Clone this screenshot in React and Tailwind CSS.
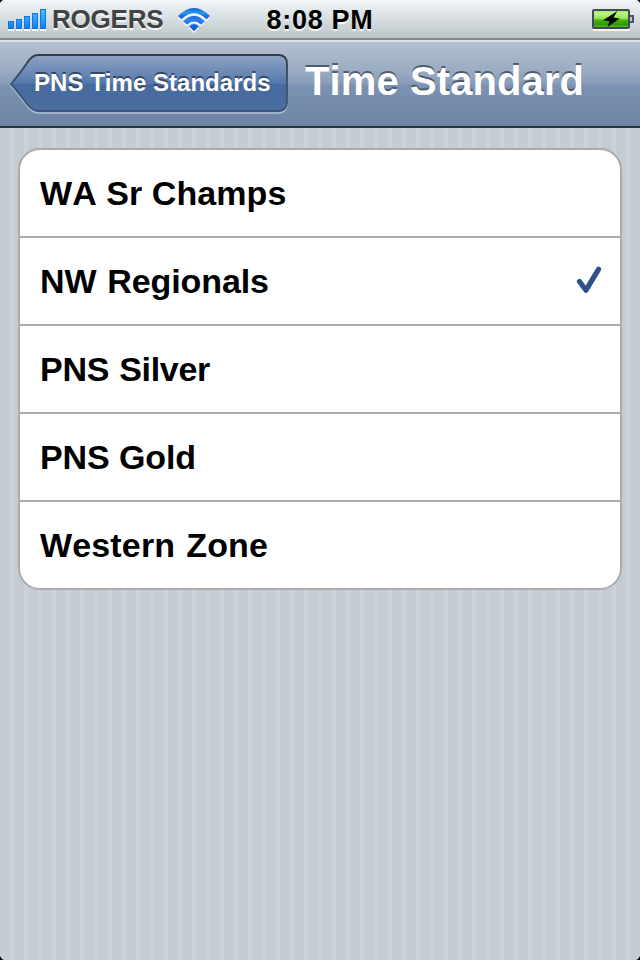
const rows = [
  { name: 'WA Sr Champs', fit: 'tracking-[0.07px]' },
  { name: 'NW Regionals', fit: '[word-spacing:1.5px] tracking-[-0.1px]', checked: true },
  { name: 'PNS Silver', fit: 'tracking-[-0.3px] [word-spacing:1px]' },
  { name: 'PNS Gold', fit: 'tracking-[-0.1px]' },
  { name: 'Western Zone', fit: 'tracking-[0.15px] [word-spacing:1.5px]' },
];

function Signal() {
  return (
    <svg width="40" height="22" viewBox="0 0 40 22" className="shrink-0">
      <defs>
        <linearGradient id="bar" x1="0" y1="0" x2="0" y2="22" gradientUnits="userSpaceOnUse">
          <stop offset="0" stopColor="#4cc4ff" />
          <stop offset="0.5" stopColor="#229dff" />
          <stop offset="1" stopColor="#0a74f5" />
        </linearGradient>
      </defs>
      {[8, 10, 13, 16, 20].map((h, i) => (
        <g key={h}>
          <rect x={i * 8} y={21 - h} width="6" height={h + 1} fill="#fff" />
          <rect x={i * 8} y={20 - h} width="6" height={h} fill="#1673df" />
          <rect x={i * 8 + 1} y={21 - h} width="4" height={h - 2} fill="url(#bar)" />
        </g>
      ))}
    </svg>
  );
}

function Wifi() {
  return (
    <svg width="34" height="26" viewBox="0 0 34 26" className="shrink-0">
      <defs>
        <linearGradient id="wifi" x1="0" y1="0" x2="0" y2="24" gradientUnits="userSpaceOnUse">
          <stop offset="0" stopColor="#1a58c4" />
          <stop offset="0.2" stopColor="#2b9df8" />
          <stop offset="0.34" stopColor="#1c68da" />
          <stop offset="0.5" stopColor="#2585f5" />
          <stop offset="1" stopColor="#0b45cc" />
        </linearGradient>
        <g id="arcs">
          <path d="M1 8Q17 -8 33 8L29.600 11.400Q17 -1 4.400 11.400Z" />
          <path d="M6.400 13.300Q17 2.700 27.600 13.300L24 16.800Q17 10 10 16.800Z" />
          <path d="M12.300 18.500Q17 13.600 21.700 18.500L17 23.200Z" />
        </g>
      </defs>
      <use href="#arcs" y="1.7" fill="#fff" />
      <use href="#arcs" fill="url(#wifi)" />
    </svg>
  );
}

function Battery() {
  return (
    <svg width="44" height="24" viewBox="0 0 44 24" className="shrink-0">
      <defs>
        <linearGradient id="charge" x1="0" y1="0" x2="0" y2="1">
          <stop offset="0" stopColor="#9be55a" />
          <stop offset="0.2" stopColor="#b9f780" />
          <stop offset="0.48" stopColor="#8de44c" />
          <stop offset="0.56" stopColor="#46b50c" />
          <stop offset="0.8" stopColor="#2f9a00" />
          <stop offset="1" stopColor="#5fca20" />
        </linearGradient>
      </defs>
      <rect x="1" y="20" width="37" height="3" fill="#fff" opacity=".8" />
      <rect x="1" y="2" width="36" height="18" rx="1" fill="url(#charge)" stroke="#43485f" strokeWidth="2" />
      <path d="M38 8h3v6h-3" fill="#c5cbd0" stroke="#4d5369" strokeWidth="2" />
      <path d="M25.500 3L11 12.300L17.500 13.200L15.500 19L27.800 10.600L21.500 9.400Z" fill="#050805" />
    </svg>
  );
}

function BackButton() {
  return (
    <button className="relative ml-[10px] mt-[10px] h-[62px] w-[280px] shrink-0 pl-[24px] text-left">
      <svg width="280" height="62" viewBox="0 0 280 62" className="absolute left-0 top-0">
        <defs>
          <linearGradient id="back" x1="0" y1="0" x2="0" y2="1">
            <stop offset="0" stopColor="#8ba2c2" />
            <stop offset="0.25" stopColor="#738fb8" />
            <stop offset="0.51" stopColor="#5377aa" />
            <stop offset="0.52" stopColor="#466a9f" />
            <stop offset="1" stopColor="#4a6e9f" />
          </linearGradient>
          <linearGradient id="edge" x1="0" y1="0" x2="0" y2="1">
            <stop offset="0" stopColor="#333b47" />
            <stop offset="0.5" stopColor="#3c4e6c" />
            <stop offset="1" stopColor="#3c5379" />
          </linearGradient>
          <path id="shape" d="M1 32Q11 20 17 11Q22 3 28 3H268Q277 3 277 12V50Q277 59 268 59H28Q23 59 17 52Q11 44 1 32Z" />
        </defs>
        <use href="#shape" y="2" fill="none" stroke="#aebdce" strokeWidth="1.500" />
        <use href="#shape" fill="url(#back)" stroke="url(#edge)" strokeWidth="1.800" />
      </svg>
      <span className="relative block whitespace-nowrap text-[24px] leading-[60px] tracking-[0.03px] text-white [text-shadow:0_-2px_0_#34466a]">
        PNS Time Standards
      </span>
    </button>
  );
}

export default function App() {
  return (
    <div className="relative flex h-[960px] w-[640px] flex-col overflow-hidden bg-[repeating-linear-gradient(90deg,#c5ccd4_0px,#c5ccd4_10px,#cbd2d8_10px,#cbd2d8_14px)] font-['Liberation_Sans',Arial,sans-serif] font-bold [font-kerning:none]">
      <header className="grid h-[40px] shrink-0 grid-cols-[1fr_auto_1fr] items-start border-b-2 border-[#7f8a8c] bg-linear-to-b from-[#f0f6f9] to-[#bec5c7] leading-[38px]">
        <div className="flex pl-[8px]">
          <div className="pt-[9px] leading-none"><Signal /></div>
          <span className="ml-[4px] text-[26px] tracking-[-0.2px] text-[#404244] [text-shadow:0_2px_0_#f4f7f8]">ROGERS</span>
          <div className="ml-[14px] pt-[8px] leading-none"><Wifi /></div>
        </div>
        <time className="text-[27px] leading-[40px] tracking-[0.7px] text-black [text-shadow:0_2px_0_#f4f7f8]">8:08 PM</time>
        <div className="flex justify-end pr-[4px] pt-[8px] leading-none"><Battery /></div>
      </header>
      <nav className="flex h-[88px] shrink-0 border-b-2 border-t-2 border-b-[#2d3239] border-t-[#dde2e6] bg-[linear-gradient(180deg,#b3c0d0_0px,#9badc2_28px,#889cb9_42px,#7c92b2_43px,#6d84a4_84px)]">
        <BackButton />
        <h1 className="ml-[15px] whitespace-nowrap text-[40px] leading-[78px] tracking-[0.1px] text-white [text-shadow:0_-2px_0_#4c5b70]">Time Standard</h1>
      </nav>
      <main className="px-[18px] pt-[20px]">
        <ul className="overflow-hidden rounded-[22px] border-2 border-[#ababab] bg-white">
          {rows.map((row) => (
            <li key={row.name} className="flex h-[88px] items-center justify-between border-b-2 border-[#ababab] pl-[20px] pr-[17px] text-[34px] text-black last:h-[86px] last:border-b-0">
              <span className={row.fit}>{row.name}</span>
              {row.checked && (
                <svg width="28" height="32" viewBox="0 0 28 32" className="mb-[3px]">
                  <path d="M4.500 17.500L11 26.200L23.500 5.300" fill="none" stroke="#304f87" strokeWidth="5.200" strokeLinecap="round" strokeLinejoin="round" />
                </svg>
              )}
            </li>
          ))}
        </ul>
      </main>
      <svg width="640" height="960" className="pointer-events-none absolute left-0 top-0">
        <path d="M0 0H3Q1 1 0 3ZM640 0V3Q639 1 637 0ZM0 960V956Q1 959 4 960ZM640 960V956Q639 959 636 960Z" fill="#000" />
      </svg>
    </div>
  );
}
